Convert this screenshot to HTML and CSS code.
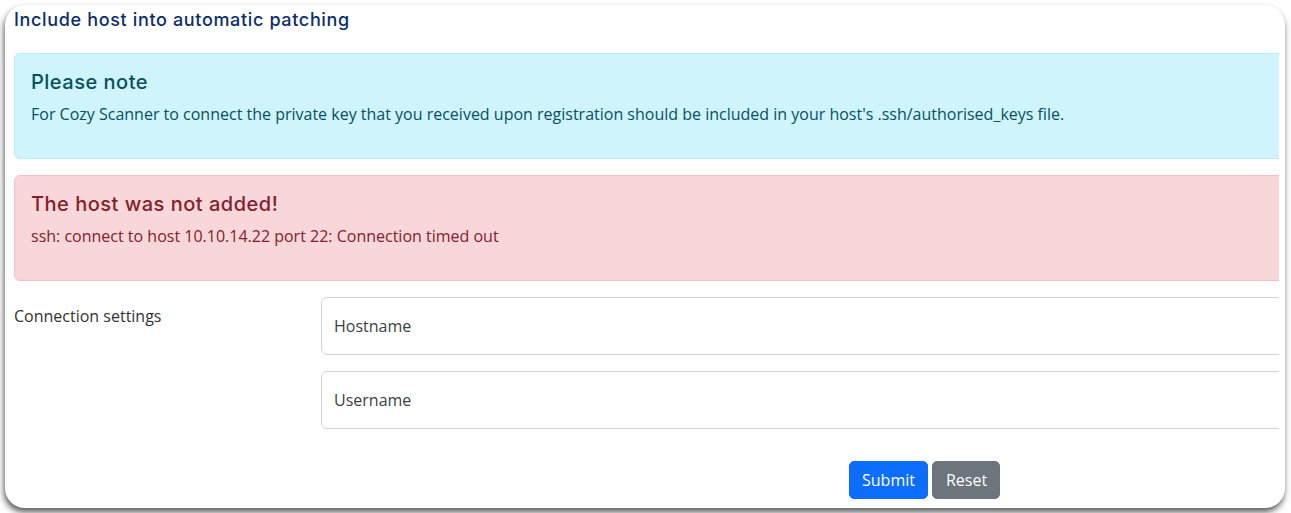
FILE: index.html
```html
<!DOCTYPE html>
<html lang="en">
<head>
<meta charset="utf-8">
<title>Include host into automatic patching</title>
<link rel="stylesheet" href="styles.css">
</head>
<body>
<div class="card">
  <h1 class="card-title">Include host into automatic patching</h1>
  <div class="clip">
    <div class="inner">
      <div class="alert alert-info">
        <h4 class="alert-heading">Please note</h4>
        <p>For Cozy Scanner to connect the private key that you received upon registration should be included in your host's .ssh/authorised_keys file.</p>
      </div>
      <div class="alert alert-danger">
        <h4 class="alert-heading">The host was not added!</h4>
        <p>ssh: connect to host 10.10.14.22 port 22: Connection timed out</p>
      </div>
      <form class="form">
        <div class="row">
          <label class="label">Connection settings</label>
          <div class="fields">
            <input class="input" type="text" placeholder="Hostname">
            <input class="input" type="text" placeholder="Username">
          </div>
        </div>
        <div class="actions">
          <button type="submit" class="btn btn-primary">Submit</button>
          <button type="reset" class="btn btn-secondary">Reset</button>
        </div>
      </form>
    </div>
  </div>
</div>
</body>
</html>
```

FILE: styles.css
```css
* { box-sizing: border-box; }
html, body { margin: 0; padding: 0; background: #ffffff; }
body {
  font-family: "Open Sans", "Noto Sans", sans-serif;
  color: #212529;
  padding: 5px 6px 5px 5px;
}
.card {
  background: #fff;
  border-radius: 20px;
  box-shadow: -1px 4px 6px rgba(0, 0, 0, 0.65);
  height: 503px;
  padding: 3px 0 0 9px;
  overflow: hidden;
}
.card-title {
  margin: 0;
  font-family: "Inter", "Noto Sans", sans-serif;
  font-weight: 500;
  font-size: 18px;
  letter-spacing: 0.65px;
  line-height: 24px;
  color: #0b2d6e;
}
.clip {
  width: 1265px;
  overflow: hidden;
  margin-top: 21px;
}
.inner { width: 1300px; }
.alert {
  border: 1px solid;
  border-radius: 6px;
  padding: 14px 16px 16px 16px;
  height: 106px;
  margin-bottom: 16px;
}
.alert-info { background: #cff4fc; border-color: #b6effb; color: #055160; }
.alert-danger { background: #f8d7da; border-color: #f5c2c7; color: #842029; }
.alert-heading {
  margin: 0 0 6px 0;
  font-family: "Inter", "Noto Sans", sans-serif;
  font-weight: 500;
  font-size: 20px;
  letter-spacing: 0.5px;
  line-height: 28px;
}
.alert p { margin: 0; font-size: 16px; line-height: 24px; }
.form { margin-top: 16px; }
.row { display: flex; }
.label {
  width: 307px;
  flex: none;
  font-size: 16px;
  line-height: 24px;
  padding-top: 7px;
  color: #333;
}
.fields { flex: 1; display: flex; flex-direction: column; gap: 16px; }
.input {
  height: 58px;
  border: 1px solid #ced4da;
  border-radius: 6px;
  padding: 0 12px;
  font-family: "Open Sans", sans-serif;
  font-size: 16px;
  color: #212529;
  background: #fff;
}
.input::placeholder { color: #3a3f44; }
.actions {
  display: flex;
  gap: 4px;
  margin-top: 32px;
  padding-left: 835px;
}
.btn {
  height: 38px;
  border: 1px solid transparent;
  border-radius: 5px;
  padding: 0 12px;
  font-family: "Open Sans", sans-serif;
  font-size: 16px;
  color: #fff;
}
.btn-primary { background: #0d6efd; border-color: #0d6efd; }
.btn-secondary { background: #6c757d; border-color: #6c757d; padding: 0 12px 0 13px; }
```
